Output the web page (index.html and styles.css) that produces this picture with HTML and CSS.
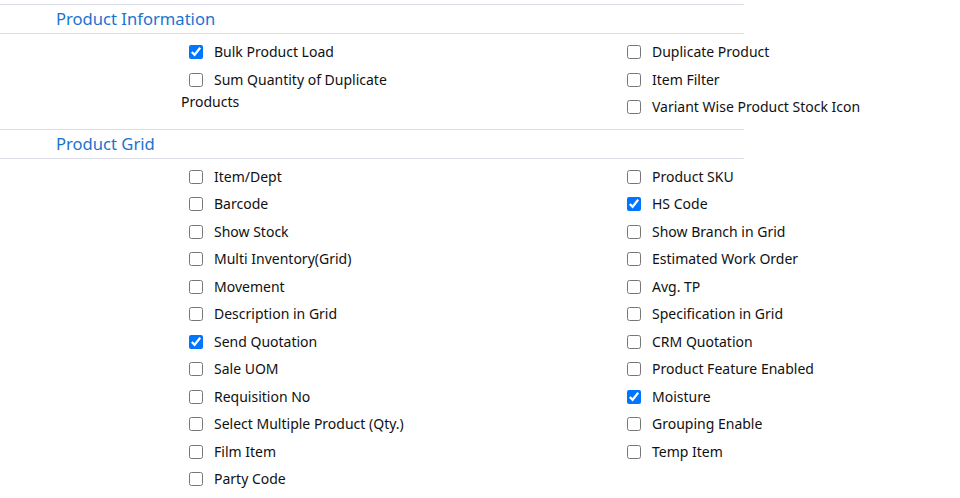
FILE: index.html
```html
<!DOCTYPE html>
<html lang="en">
<head>
    <meta charset="UTF-8">
    <title>Settings</title>
    <link rel="stylesheet" href="styles.css">
</head>
<body>
    <div class="panel">
        <div class="section-title">Product Information</div>
        <div class="options first">
            <div class="col">
                <label class="opt"><input type="checkbox" checked>Bulk Product Load</label>
                <label class="opt"><input type="checkbox">Sum Quantity of Duplicate Products</label>
            </div>
            <div class="col">
                <label class="opt"><input type="checkbox">Duplicate Product</label>
                <label class="opt"><input type="checkbox">Item Filter</label>
                <label class="opt"><input type="checkbox">Variant Wise Product Stock Icon</label>
            </div>
        </div>

        <div class="section-title">Product Grid</div>
        <div class="options">
            <div class="col">
                <label class="opt"><input type="checkbox">Item/Dept</label>
                <label class="opt"><input type="checkbox">Barcode</label>
                <label class="opt"><input type="checkbox">Show Stock</label>
                <label class="opt"><input type="checkbox">Multi Inventory(Grid)</label>
                <label class="opt"><input type="checkbox">Movement</label>
                <label class="opt"><input type="checkbox">Description in Grid</label>
                <label class="opt"><input type="checkbox" checked>Send Quotation</label>
                <label class="opt"><input type="checkbox">Sale UOM</label>
                <label class="opt"><input type="checkbox">Requisition No</label>
                <label class="opt"><input type="checkbox">Select Multiple Product (Qty.)</label>
                <label class="opt"><input type="checkbox">Film Item</label>
                <label class="opt"><input type="checkbox">Party Code</label>
            </div>
            <div class="col">
                <label class="opt"><input type="checkbox">Product SKU</label>
                <label class="opt"><input type="checkbox" checked>HS Code</label>
                <label class="opt"><input type="checkbox">Show Branch in Grid</label>
                <label class="opt"><input type="checkbox">Estimated Work Order</label>
                <label class="opt"><input type="checkbox">Avg. TP</label>
                <label class="opt"><input type="checkbox">Specification in Grid</label>
                <label class="opt"><input type="checkbox">CRM Quotation</label>
                <label class="opt"><input type="checkbox">Product Feature Enabled</label>
                <label class="opt"><input type="checkbox" checked>Moisture</label>
                <label class="opt"><input type="checkbox">Grouping Enable</label>
                <label class="opt"><input type="checkbox">Temp Item</label>
            </div>
        </div>
    </div>
</body>
</html>
```

FILE: styles.css
```css
body {
    font-family: "Noto Sans", sans-serif;
    margin: 0;
    color: #111;
    background: #fff;
}
.panel {
    width: 744px;
    padding-top: 4px;
}
.section-title {
    border-top: 1px solid #dcdce8;
    border-bottom: 1px solid #dcdce8;
    height: 28px;
    line-height: 28px;
    padding-left: 56px;
    font-size: 16.6px;
    color: #1a73d0;
}
.options {
    display: flex;
    padding: 7px 0 3px 181px;
}
.options.first {
    padding-bottom: 5px;
}
.col {
    flex: none;
    width: 438px;
}
.col:last-child {
    width: 300px;
}
.opt {
    display: block;
    width: 245px;
    font-size: 14px;
    line-height: 22px;
    margin-bottom: 5.5px;
}
.col:last-child .opt {
    width: 300px;
}
.opt input {
    width: 14px;
    height: 14px;
    margin: 0 11px 0 8px;
    vertical-align: -2px;
}
```
